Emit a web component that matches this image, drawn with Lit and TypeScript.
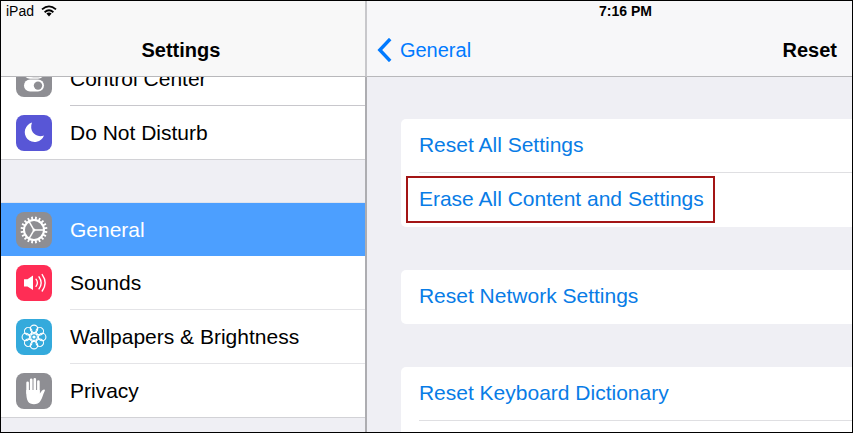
import { LitElement, html, css, svg } from "lit";
import { customElement, property } from "lit/decorators.js";
import { classMap } from "lit/directives/class-map.js";

const TEETH = Array.from({ length: 20 }, (_, i) => i * 18);
const PETALS = Array.from({ length: 8 }, (_, i) => i * 45);

const glyphs = {
  control: svg`
    <rect x="8" y="5" width="20" height="12" rx="6" fill="none" stroke="#fff" stroke-width="1.4"/>
    <circle cx="14" cy="11" r="6" fill="#fff"/>
    <rect x="8" y="18.6" width="20" height="12" rx="6" fill="#fff"/>
    <circle cx="22" cy="24.6" r="4.2" fill="#8e8e93"/>`,
  moon: svg`<path fill="#fff" d="M16 7.6A9.9 9.9 0 1 0 28 20.4C20.6 23.4 12.6 17 16 7.6Z"/>`,
  gear: svg`
    <g stroke="#fff" fill="none">
      <circle cx="18" cy="18" r="10" stroke-width="2"/>
      ${TEETH.map((a) => svg`<path d="M18 4.6V8" stroke-width="1.8" transform="rotate(${a + 9} 18 18)"/>`)}
      ${[0, 120, 240].map((a) => svg`<path d="M18 18H28" stroke-width="1.5" transform="rotate(${a} 18 18)"/>`)}
    </g>
    <circle cx="18" cy="18" r="1.5" fill="#fff"/>`,
  sound: svg`
    <path fill="#fff" d="M8 14.2H11.5L17 10.5V25L11.5 21.4H8Z"/>
    <g fill="none" stroke="#fff" stroke-linecap="round">
      <path stroke-width="1.3" d="M20 14.2Q22.8 17.8 20 21.4"/>
      <path stroke-width="1.4" d="M23 11.8Q27.3 17.8 23 23.8"/>
      <path stroke-width="1.4" d="M26.2 9.6Q32 17.8 26.2 26"/>
    </g>`,
  flower: svg`
    <g fill="none" stroke="#fff" stroke-width="1.1">
      ${PETALS.map((a) => svg`<circle cx="18" cy="9.8" r="3.7" transform="rotate(${a} 18 18)"/>`)}
      ${PETALS.map((a) => svg`<path d="M18 13.5Q20.4 14 20.6 11.8" transform="rotate(${a} 18 18)"/>`)}
      <circle cx="18" cy="18" r="3.4"/>
    </g>
    <circle cx="18" cy="18" r="1.6" fill="#fff"/>`,
  hand: svg`
    <g fill="none" stroke="#fff" stroke-width="2.6" stroke-linecap="round">
      <path d="M11.6 20V9.8M15.2 19V6.8M18.8 19V6.4M22.4 20V8.6"/>
    </g>
    <path fill="#fff" d="M10.3 17H23.7V20.6C24.9 20 25.4 17 28.2 16.6C29.2 16.7 29 17.6 28.5 18.4C27 21 26.4 25 24.4 28C22 32.2 14.2 32.2 12 28.4C10.6 26 10.3 22.5 10.3 20Z"/>`,
};

type Glyph = keyof typeof glyphs;

interface Item {
  label: string;
  glyph: Glyph;
  tint: string;
  selected?: boolean;
}

const SIDEBAR: Item[][] = [
  [
    { label: "Control Center", glyph: "control", tint: "gray" },
    { label: "Do Not Disturb", glyph: "moon", tint: "violet" },
  ],
  [
    { label: "General", glyph: "gear", tint: "gray", selected: true },
    { label: "Sounds", glyph: "sound", tint: "red" },
    { label: "Wallpapers & Brightness", glyph: "flower", tint: "cyan" },
    { label: "Privacy", glyph: "hand", tint: "gray" },
  ],
];

const ACTIONS = [
  ["Reset All Settings", "Erase All Content and Settings"],
  ["Reset Network Settings"],
  ["Reset Keyboard Dictionary"],
];

const MARKED = "Erase All Content and Settings";

@customElement("settings-icon")
class SettingsIcon extends LitElement {
  @property() glyph: Glyph = "gear";
  @property() tint = "gray";

  static styles = css`
    :host { display: block; flex: none; }
    .tile { display: block; width: 36px; height: 36px; border-radius: 8px; }
    .gray { background: #8e8e93; }
    .violet { background: #5856d6; }
    .red { background: #ff2d55; }
    .cyan { background: #34aadc; }
  `;

  render() {
    return html`<svg class="tile ${this.tint}" viewBox="0 0 36 36" aria-hidden="true">${glyphs[this.glyph]}</svg>`;
  }
}

@customElement("app-root")
class AppRoot extends LitElement {
  static styles = css`
    :host {
      display: flex;
      box-sizing: border-box;
      height: 100vh;
      overflow: hidden;
      border: 1px solid #000;
      background: #efeff4;
      color: #000;
      font: 21px/24px "Liberation Sans", Arial, sans-serif;
    }
    .pane { display: flex; flex-direction: column; min-width: 0; overflow: hidden; }
    .sidebar { flex: 0 0 43%; box-sizing: border-box; }
    .detail { flex: 1; }
    .bar {
      flex: none;
      box-sizing: border-box;
      height: 76px;
      border-bottom: 1px solid #b8b8bb;
      background: #f7f7f9;
      font-size: 20px;
    }
    .sidebar .bar { background: #f8f8f8; border-right: 2px solid #c8c8cb; }
    .status { display: flex; align-items: center; gap: 7px; height: 20px; padding: 0 5px; font-size: 14px; line-height: 20px; }
    .detail .status { justify-content: center; padding: 0 0 0 32px; font-weight: bold; }
    .wifi { width: 16px; height: 12px; }
    .title { margin: 0; font-size: 20px; line-height: 24px; font-weight: bold; }
    .sidebar .title { padding: 17px 4px 0 0; text-align: center; }
    .heading { display: flex; align-items: center; justify-content: space-between; padding: 17px 15px 0 10px; }
    .back { display: flex; align-items: center; gap: 8px; height: 24px; color: #007aff; text-decoration: none; }
    .chevron { width: 15px; height: 24px; }
    .scroll { flex: 1; min-height: 0; overflow: hidden; }
    .sidebar .scroll { border-right: 2px solid #adadb1; }
    .list { margin: 0; padding: 0; list-style: none; background: #fff; }
    .sidebar .list { border-bottom: 1px solid #d2d2d6; }
    .sidebar .list:first-child { margin-top: -25px; }
    .sidebar .list + .list { margin-top: 42px; border-top: 1px solid #dfe4ee; }
    .link { display: flex; align-items: flex-start; gap: 18px; padding-left: 15px; color: inherit; text-decoration: none; }
    .icon { margin-top: 9px; }
    .text { flex: 1; box-sizing: border-box; height: 54px; line-height: 54px; white-space: nowrap; border-bottom: 1px solid #e4e4e7; }
    .list:first-child .text { border-color: #c8c7cc; }
    .sidebar .item:last-child .text,
    .selected .text { height: 53px; border-bottom: 0; }
    .selected { background: #4c9fff; color: #fff; }
    .groups { padding: 42px 0 0 34px; display: flex; flex-direction: column; gap: 43px; }
    .group { flex: none; border-radius: 5px 0 0 5px; }
    .group:last-child { flex: 1 0 auto; border-bottom-left-radius: 0; }
    .action {
      display: block;
      box-sizing: border-box;
      width: 100%;
      height: 54px;
      padding: 0 0 2px 18px;
      border: 0;
      background: none;
      color: #087ce6;
      font: inherit;
      text-align: left;
      white-space: nowrap;
    }
    .item:not(:last-child) .action,
    .group:last-child .action { background: linear-gradient(#dfdfe2, #dfdfe2) 18px 100% / 100% 1px no-repeat; }
    .mark { position: relative; }
    .mark::after {
      content: "";
      position: absolute;
      inset: -11px -11px -13px -13px;
      border: 2px solid #a31515;
    }
  `;

  render() {
    return html`
      <nav class="pane sidebar" aria-label="Settings">
        <header class="bar">
          <div class="status">
            <span>iPad</span>
            <svg class="wifi" viewBox="0 0 16 12" role="img" aria-label="Wi-Fi">
              <g fill="none" stroke="#000" stroke-width="1.8">
                <path d="M1 4.4Q8 -1.6 15 4.4"/>
                <path d="M3.6 7.2Q8 3.4 12.4 7.2"/>
              </g>
              <path d="M5.4 8.6Q8 6.6 10.6 8.6L8 11.4Z"/>
            </svg>
          </div>
          <h1 class="title">Settings</h1>
        </header>
        <div class="scroll">
          ${SIDEBAR.map((group) => html`
            <ul class="list">
              ${group.map((item) => html`
                <li class="item">
                  <a href="#" class=${classMap({ link: true, selected: !!item.selected })}>
                    <settings-icon class="icon" .glyph=${item.glyph} .tint=${item.tint}></settings-icon>
                    <span class="text">${item.label}</span>
                  </a>
                </li>`)}
            </ul>`)}
        </div>
      </nav>
      <main class="pane detail">
        <header class="bar">
          <div class="status">7:16 PM</div>
          <div class="heading">
            <a class="back" href="#">
              <svg class="chevron" viewBox="0 0 15 24" aria-hidden="true">
                <path d="M13.2 1L2.8 12L13.2 23" fill="none" stroke="#007aff" stroke-width="3.4"/>
              </svg>
              <span>General</span>
            </a>
            <h2 class="title">Reset</h2>
          </div>
        </header>
        <div class="scroll groups">
          ${ACTIONS.map((group) => html`
            <ul class="list group">
              ${group.map((label) => html`
                <li class="item">
                  <button type="button" class="action">
                    <span class=${classMap({ mark: label === MARKED })}>${label}</span>
                  </button>
                </li>`)}
            </ul>`)}
        </div>
      </main>
    `;
  }
}
